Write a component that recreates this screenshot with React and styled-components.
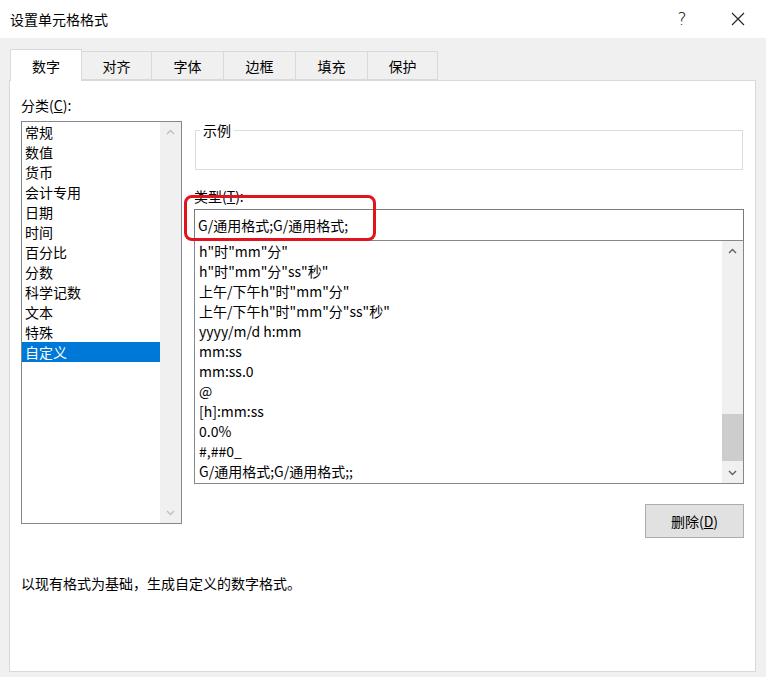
import React from "react";
import styled, { createGlobalStyle } from "styled-components";

const Global = createGlobalStyle`
  html, body { margin: 0; padding: 0; background: #f0f0f0; }
  body { font-family: "Noto Sans CJK SC", "Noto Sans", sans-serif; font-size: 14px; color: #000; }
`;

const Dialog = styled.div`
  width: 766px;
  height: 677px;
  display: flex;
  flex-direction: column;
  overflow: hidden;
  background: #f0f0f0;
`;

const TitleBar = styled.div`
  height: 38px;
  background: #fff;
  display: flex;
  align-items: center;
  padding-left: 10px;
  font-size: 14px;
`;

const Title = styled.span`
  flex: 1;
`;

const TitleButton = styled.span`
  width: 56px;
  display: flex;
  justify-content: center;
  font-family: "DejaVu Sans", sans-serif;
  font-size: 17px;
  font-weight: 300;
`;

const Tabs = styled.div`
  display: flex;
  align-items: flex-end;
  padding: 10px 0 0 10px;
  height: 32px;
`;

const Tab = styled.div`
  width: ${(p) => p.$w}px;
  height: ${(p) => (p.$active ? 32 : 29)}px;
  box-sizing: border-box;
  display: flex;
  align-items: center;
  justify-content: center;
  background: ${(p) => (p.$active ? "#fff" : "#f0f0f0")};
  border: 1px solid #d9d9d9;
  border-bottom: ${(p) => (p.$active ? "none" : "1px solid #d9d9d9")};
  border-left: ${(p) => (p.$active || p.$first ? "1px solid #d9d9d9" : "none")};
  margin-bottom: ${(p) => (p.$active ? "-1px" : "0")};
  position: relative;
  z-index: ${(p) => (p.$active ? 1 : 0)};
`;

const Panel = styled.div`
  margin: 0 10px 0 9px;
  height: 592px;
  box-sizing: border-box;
  background: #fff;
  border: 1px solid #d9d9d9;
  padding: 14px 11px 0 11px;
  display: flex;
  flex-direction: column;
`;

const Columns = styled.div`
  display: flex;
  gap: 12px;
`;

const LeftCol = styled.div`
  width: 161px;
  display: flex;
  flex-direction: column;
`;

const Label = styled.div`
  height: 26px;
  line-height: 20px;
`;

const U = styled.span`
  text-decoration: underline;
`;

const ListBox = styled.div`
  height: ${(p) => p.$h}px;
  box-sizing: border-box;
  border: 1px solid #828790;
  display: flex;
  background: #fff;
`;

const Items = styled.div`
  flex: 1;
  padding-top: ${(p) => p.$top || 0}px;
  overflow: hidden;
`;

const Item = styled.div`
  height: 20px;
  line-height: 20px;
  padding-left: ${(p) => p.$pad || 3}px;
  white-space: nowrap;
  background: ${(p) => (p.$sel ? "#0078d7" : "transparent")};
  color: ${(p) => (p.$sel ? "#fff" : "#000")};
`;

const ScrollBar = styled.div`
  width: 21px;
  background: #f0f0f0;
  display: flex;
  flex-direction: column;
  justify-content: space-between;
  align-items: center;
  position: relative;
`;

const Arrow = styled.div`
  height: 20px;
  display: flex;
  align-items: center;
  justify-content: center;
  color: ${(p) => (p.$dim ? "#bfbfbf" : "#606060")};
`;

const Thumb = styled.div`
  position: absolute;
  left: 0;
  right: 0;
  top: ${(p) => p.$top}px;
  height: ${(p) => p.$h}px;
  background: #cdcdcd;
`;

const RightCol = styled.div`
  flex: 1;
  display: flex;
  flex-direction: column;
  padding-top: 28px;
`;

const Group = styled.fieldset`
  margin: 0;
  height: 47px;
  box-sizing: border-box;
  border: 1px solid #dcdcdc;
  padding: 0;
  margin-left: 1px;
  margin-right: 1px;
  legend {
    margin-left: 4px;
    padding: 0 3px;
    line-height: 14px;
  }
`;

const TypeLabel = styled.div`
  margin-top: 16px;
  height: 23px;
  line-height: 20px;
`;

const TypeWrap = styled.div`
  position: relative;
`;

const Highlight = styled.div`
  position: absolute;
  left: -10px;
  top: -14px;
  width: 192px;
  height: 46px;
  box-sizing: border-box;
  border: 3px solid #e0141e;
  border-radius: 8px;
  pointer-events: none;
  z-index: 2;
`;

const Input = styled.div`
  height: 31px;
  box-sizing: border-box;
  border: 1px solid #7a7a7a;
  border-bottom: none;
  padding: 5px 3px;
  line-height: 20px;
`;

const ButtonRow = styled.div`
  display: flex;
  justify-content: flex-end;
  margin-top: 20px;
`;

const Button = styled.div`
  width: 99px;
  height: 34px;
  box-sizing: border-box;
  border: 1px solid #adadad;
  background: #e1e1e1;
  display: flex;
  align-items: center;
  justify-content: center;
`;

const Description = styled.div`
  margin-top: 35px;
`;

const Up = ({ dim }) => (
  <Arrow $dim={dim}>
    <svg width="9" height="6" viewBox="0 0 9 6"><path d="M1 5 L4.5 1.5 L8 5" fill="none" stroke="currentColor" strokeWidth="1.4" /></svg>
  </Arrow>
);
const Down = ({ dim }) => (
  <Arrow $dim={dim}>
    <svg width="9" height="6" viewBox="0 0 9 6"><path d="M1 1 L4.5 4.5 L8 1" fill="none" stroke="currentColor" strokeWidth="1.4" /></svg>
  </Arrow>
);

const categories = ["常规", "数值", "货币", "会计专用", "日期", "时间", "百分比", "分数", "科学记数", "文本", "特殊", "自定义"];
const formats = [
  'h"时"mm"分"',
  'h"时"mm"分"ss"秒"',
  '上午/下午h"时"mm"分"',
  '上午/下午h"时"mm"分"ss"秒"',
  "yyyy/m/d h:mm",
  "mm:ss",
  "mm:ss.0",
  "@",
  "[h]:mm:ss",
  "0.0%",
  "#,##0_",
  "G/通用格式;G/通用格式;;",
];

const tabs = [["数字", 72], ["对齐", 70], ["字体", 72], ["边框", 72], ["填充", 72], ["保护", 70]];

export default function App() {
  return (
    <Dialog>
      <Global />
      <TitleBar>
        <Title>设置单元格格式</Title>
        <TitleButton>?</TitleButton>
        <TitleButton>
          <svg width="14" height="14" viewBox="0 0 14 14"><path d="M1 1 L13 13 M13 1 L1 13" stroke="#222" strokeWidth="1.1" /></svg>
        </TitleButton>
      </TitleBar>
      <Tabs>
        {tabs.map(([t, w], i) => (
          <Tab key={t} $w={w} $active={i === 0} $first={i === 0}>{t}</Tab>
        ))}
      </Tabs>
      <Panel>
        <Columns>
          <LeftCol>
            <Label>分类(<U>C</U>):</Label>
            <ListBox $h={403}>
              <Items>
                {categories.map((c) => (
                  <Item key={c} $sel={c === "自定义"}>{c}</Item>
                ))}
              </Items>
              <ScrollBar>
                <Up dim />
                <Down dim />
              </ScrollBar>
            </ListBox>
          </LeftCol>
          <RightCol>
            <Group><legend>示例</legend></Group>
            <TypeLabel>类型(<U>T</U>):</TypeLabel>
            <TypeWrap>
              <Highlight />
              <Input>G/通用格式;G/通用格式;</Input>
            </TypeWrap>
            <ListBox $h={244}>
              <Items>
                {formats.map((f) => (
                  <Item key={f} $pad={4}>{f}</Item>
                ))}
              </Items>
              <ScrollBar>
                <Up />
                <Thumb $top={173} $h={47} />
                <Down />
              </ScrollBar>
            </ListBox>
            <ButtonRow>
              <Button>删除(<U>D</U>)</Button>
            </ButtonRow>
          </RightCol>
        </Columns>
        <Description>以现有格式为基础，生成自定义的数字格式。</Description>
      </Panel>
    </Dialog>
  );
}
